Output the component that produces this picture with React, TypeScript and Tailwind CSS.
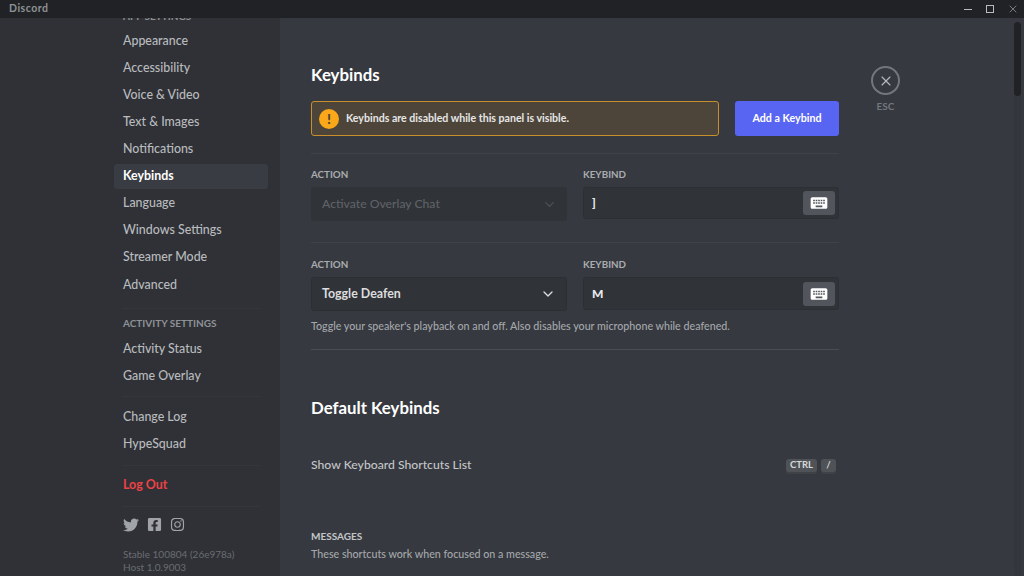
import { ChevronDown, X } from "lucide-react";
import { FaFacebookSquare, FaInstagram, FaTwitter } from "react-icons/fa";
import { MdKeyboard } from "react-icons/md";

const font = { fontFamily: 'Lato, "Noto Sans", sans-serif' };

function NavItem({ label, active }: { label: string; active?: boolean }) {
  return (
    <div className={`mb-[2.1px] flex h-[25px] items-center rounded-[3px] px-[9px] text-[12.4px] ${active ? "bg-[#393c42] font-bold text-white" : "font-medium text-[#b9bbbe]"}`}>
      {label}
    </div>
  );
}

function Divider({ className }: { className: string }) {
  return <div className={`h-px ${className}`} />;
}

function FieldLabel({ children }: { children: string }) {
  return <div className="mb-[6px] h-[13px] text-[9.8px] leading-[13px] font-bold text-[#a9acb0]">{children}</div>;
}

function KeybindInput({ value, h }: { value: string; h: string }) {
  return (
    <div className={`flex items-center justify-between rounded-[3px] border border-[#2c2f33] bg-[#303338] pr-[3px] pl-[8px] ${h}`}>
      <span className="text-[12px] font-black text-[#e8e9ea]">{value}</span>
      <div className="flex h-[24px] w-[32px] items-center justify-center rounded-[3px] bg-[#52555b]">
        <MdKeyboard size={20} className="text-white" />
      </div>
    </div>
  );
}

function Key({ label, w }: { label: string; w: string }) {
  return (
    <div className={`flex h-[13px] items-center justify-center rounded-[3px] bg-[#4f5257] text-[9.5px] font-bold text-[#d8d9da] shadow-[0_2px_0_#3f4247] ${w}`}>
      {label}
    </div>
  );
}

export default function App() {
  return (
    <div className="flex h-[576px] w-[1024px] flex-col overflow-hidden bg-[#36393f]" style={font}>
      <div className="z-10 flex h-[18px] shrink-0 items-center justify-between bg-[#202225] pl-[9px]">
        <span className="text-[10.5px] font-bold tracking-[0.5px] text-[#8e9297]">Discord</span>
        <div className="flex h-full items-center text-[#b9bbbe]">
          <div className="flex w-[20px] justify-center">
            <div className="h-px w-[8px] bg-[#b9bbbe]" />
          </div>
          <div className="flex w-[24px] justify-center">
            <div className="h-[8px] w-[8px] border border-[#b9bbbe]" />
          </div>
          <div className="flex w-[22px] justify-center">
            <X size={12} strokeWidth={1.2} />
          </div>
        </div>
      </div>

      <div className="relative flex min-h-0 flex-1">
        <div className="flex w-[280px] shrink-0 justify-end overflow-hidden bg-[#2f3136] pr-[12px]">
          <div className="w-[154px]">
            <div className="mt-[-10px] mb-[4.5px] h-[16px] px-[9px] text-[10px] leading-[16px] font-bold text-[#8e9297]">APP SETTINGS</div>
            {["Appearance", "Accessibility", "Voice & Video", "Text & Images", "Notifications"].map((label) => (
              <NavItem key={label} label={label} />
            ))}
            <NavItem label="Keybinds" active />
            {["Language", "Windows Settings", "Streamer Mode", "Advanced"].map((label) => (
              <NavItem key={label} label={label} />
            ))}
            <Divider className="mx-[8px] mt-[11px] bg-[#34363b]" />
            <div className="mt-[5px] h-[16px] px-[9px] pt-[1px] text-[10px] leading-[16px] font-bold text-[#8e9297]">ACTIVITY SETTINGS</div>
            <div className="mt-[6px]">
              <NavItem label="Activity Status" />
              <NavItem label="Game Overlay" />
            </div>
            <Divider className="mx-[8px] mt-[8px] bg-[#34363b]" />
            <div className="mt-[7px]">
              <NavItem label="Change Log" />
              <NavItem label="HypeSquad" />
            </div>
            <Divider className="mx-[8px] mt-[8px] bg-[#34363b]" />
            <div className="mt-[7px] flex h-[25px] items-center px-[9px] text-[12.4px] font-bold text-[#ed4245]">Log Out</div>
            <Divider className="mx-[8px] mt-[8px] bg-[#34363b]" />
            <div className="mt-[10px] flex items-center gap-[8px] px-[9px] text-[#a0a3a7]">
              <FaTwitter size={16} />
              <FaFacebookSquare size={15} />
              <FaInstagram size={15} />
            </div>
            <div className="mt-[15px] px-[9px] text-[10px] leading-[13px] text-[#6a6d72]">
              <div>Stable 100804 (26e978a)</div>
              <div>Host 1.0.9003</div>
            </div>
          </div>
        </div>

        <div className="flex min-w-0 flex-1 pl-[31px]">
          <div className="w-[528px] shrink-0">
            <h2 className="mt-[46px] h-[22px] text-[16.8px] leading-[22px] font-bold text-white">Keybinds</h2>
            <div className="mt-[15px] flex h-[35px] gap-[16px]">
              <div className="flex w-[408px] items-center gap-[7px] rounded-[3px] border border-[#c98f2c] bg-[#4d4539] pl-[7px]">
                <div className="flex h-[20px] w-[20px] items-center justify-center rounded-full bg-[#faa81a] text-[14px] font-black text-[#4d4539]">!</div>
                <span className="text-[10.6px] font-bold text-[#e6e7e8]">Keybinds are disabled while this panel is visible.</span>
              </div>
              <button className="flex w-[104px] items-center justify-center rounded-[3px] bg-[#5865f2] text-[10.7px] font-bold text-white">Add a Keybind</button>
            </div>
            <Divider className="mt-[17px] bg-[#3f4248]" />

            <div className="mt-[14px] grid grid-cols-[256px_256px] gap-x-[16px]">
              <div>
                <FieldLabel>ACTION</FieldLabel>
                <div className="flex h-[34px] items-center justify-between rounded-[3px] bg-[#303338] pr-[10px] pl-[11px] text-[12.2px] font-medium text-[#5f6267]">
                  Activate Overlay Chat
                  <ChevronDown size={15} className="text-[#4f5257]" />
                </div>
              </div>
              <div>
                <FieldLabel>KEYBIND</FieldLabel>
                <KeybindInput value="]" h="h-[32px]" />
              </div>
            </div>
            <Divider className="mt-[21px] bg-[#3f4248]" />

            <div className="mt-[15px] grid grid-cols-[256px_256px] gap-x-[16px]">
              <div>
                <FieldLabel>ACTION</FieldLabel>
                <div className="flex h-[34px] items-center justify-between rounded-[3px] border border-[#2c2f33] bg-[#303338] pr-[10px] pl-[10px] text-[12.4px] font-bold text-[#dcddde]">
                  Toggle Deafen
                  <ChevronDown size={16} className="text-[#dcddde]" />
                </div>
              </div>
              <div>
                <FieldLabel>KEYBIND</FieldLabel>
                <KeybindInput value="M" h="h-[33px]" />
              </div>
            </div>
            <p className="mt-[7px] h-[15px] text-[10.7px] leading-[15px] font-medium text-[#a4a7ab]">Toggle your speaker's playback on and off. Also disables your microphone while deafened.</p>
            <Divider className="mt-[16px] bg-[#4a4d52]" />

            <h2 className="mt-[47px] h-[22px] text-[16.8px] leading-[22px] font-bold text-white">Default Keybinds</h2>
            <div className="mt-[37px] flex h-[18px] items-center justify-between pr-[3px]">
              <span className="text-[12.2px] font-medium text-[#c4c6c9]">Show Keyboard Shortcuts List</span>
              <div className="flex gap-[4px]">
                <Key label="CTRL" w="w-[31px]" />
                <Key label="/" w="w-[15px]" />
              </div>
            </div>
            <div className="mt-[54px] h-[16px] text-[10px] leading-[16px] font-bold text-[#c4c6c9]">MESSAGES</div>
            <p className="mt-[2px] text-[10.7px] leading-[15px] font-medium text-[#a4a7ab]">These shortcuts work when focused on a message.</p>
          </div>

          <div className="ml-[32px] flex w-[29px] shrink-0 flex-col items-center pt-[48px]">
            <div className="flex h-[29px] w-[29px] items-center justify-center rounded-full border-2 border-[#72767d]">
              <X size={16} strokeWidth={1.6} className="text-[#b9bbbe]" />
            </div>
            <span className="mt-[4px] text-[10px] font-bold text-[#72767d]">ESC</span>
          </div>
        </div>

        <div className="absolute top-[4px] right-[3px] bottom-0 w-[7px] rounded-[4px] bg-[#33363c]">
          <div className="h-[74px] rounded-[4px] bg-[#202225]" />
        </div>
      </div>
    </div>
  );
}
